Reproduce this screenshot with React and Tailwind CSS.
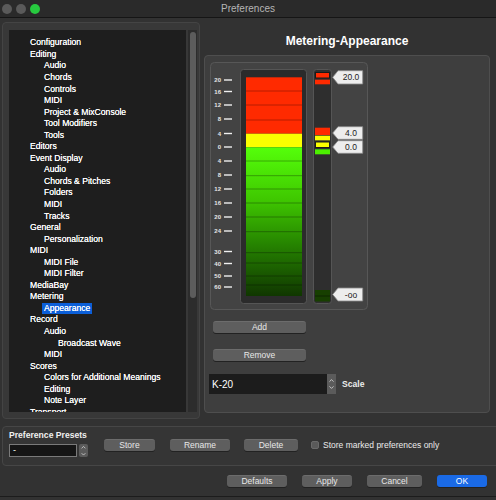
import { ChevronUp, ChevronDown } from 'lucide-react';

const tree = [
  ['Configuration', 0], ['Editing', 0], ['Audio', 1], ['Chords', 1], ['Controls', 1], ['MIDI', 1],
  ['Project & MixConsole', 1], ['Tool Modifiers', 1], ['Tools', 1], ['Editors', 0], ['Event Display', 0],
  ['Audio', 1], ['Chords & Pitches', 1], ['Folders', 1], ['MIDI', 1], ['Tracks', 1], ['General', 0],
  ['Personalization', 1], ['MIDI', 0], ['MIDI File', 1], ['MIDI Filter', 1], ['MediaBay', 0],
  ['Metering', 0], ['Appearance', 1, true], ['Record', 0], ['Audio', 1], ['Broadcast Wave', 2],
  ['MIDI', 1], ['Scores', 0], ['Colors for Additional Meanings', 1], ['Editing', 1], ['Note Layer', 1],
  ['Transport', 0],
];

const indent = ['pl-[21px]', 'pl-[35px]', 'pl-[49px]'];

// scale labels on the meter (label, y inside the meter box)
const scale = [
  ['20', 18], ['16', 29.5], ['12', 43], ['8', 57], ['4', 71.5], ['0', 85], ['4', 99], ['8', 113],
  ['12', 127], ['16', 141], ['20', 155], ['24', 169], ['30', 189.5], ['40', 201.5], ['50', 214], ['60', 225],
];
const redLines = [29, 43, 58];
const greenLines = [99, 113.7, 127, 141, 155, 169.7, 190.7, 201, 214, 223];

const tags = [
  ['20.0', 8.7, 22],
  ['4.0', 64.7, 77.3],
  ['0.0', 78.7, 91.3],
  ['-oo', 226, 239],
];

const Btn = ({ w, children, blue }) => (
  <button
    className={`${w} h-[12px] block rounded-[3px] text-[8.5px] leading-[11px] text-center shadow-[0_1px_0_#222] ${
      blue ? 'bg-[#1a6ae6] text-white' : 'bg-[#5e5e5e] text-[#e8e8e8] border-t border-[#6c6c6c]'
    }`}
  >
    {children}
  </button>
);

const Meter = () => (
  <svg width="158" height="248" className="block">
    <defs>
      <linearGradient id="grn" x1="0" y1="0" x2="0" y2="1">
        <stop offset="0" stopColor="#55ff0a" />
        <stop offset="0.35" stopColor="#3fc800" />
        <stop offset="0.65" stopColor="#268400" />
        <stop offset="1" stopColor="#103600" />
      </linearGradient>
    </defs>
    <rect x="0.5" y="0.5" width="157" height="247" rx="4" fill="#434343" stroke="#575757" />
    {scale.map(([l, y], i) => (
      <g key={i}>
        <text x="11" y={y + 2} textAnchor="end" fontSize="6" fontWeight="bold" fill="#e6e6e6" fontFamily="Liberation Sans, sans-serif">{l}</text>
        <line x1="14" x2="22" y1={y} y2={y} stroke="#f0f0f0" strokeWidth="1.4" />
      </g>
    ))}
    <rect x="30.5" y="7.5" width="66" height="234" rx="3" fill="#2b2b2b" stroke="#555" />
    <rect x="36" y="15.3" width="56" height="56.4" fill="#ff2a00" />
    <rect x="36" y="71.7" width="56" height="13.6" fill="#fbff00" />
    <rect x="36" y="85.3" width="56" height="148.7" fill="url(#grn)" />
    {redLines.map((y) => <line key={y} x1="36" x2="92" y1={y} y2={y} stroke="#b81d00" strokeWidth="1" />)}
    {greenLines.map((y) => <line key={y} x1="36" x2="92" y1={y} y2={y} stroke="rgba(0,0,0,0.3)" strokeWidth="1" />)}
    <rect x="103.5" y="7.5" width="18" height="234" rx="3" fill="#2e2e2e" stroke="#555" />
    <rect x="105.5" y="10.5" width="14" height="5.5" fill="#ff2a00" stroke="#1a1a1a" />
    <rect x="105" y="17.7" width="15" height="4.6" fill="#ff2a00" />
    <rect x="105" y="65.7" width="15" height="7.3" fill="#ff2a00" />
    <rect x="105" y="73.7" width="15" height="4.6" fill="#fbff00" />
    <rect x="105.5" y="80" width="14" height="5.5" fill="#fbff00" stroke="#1a1a1a" />
    <rect x="105" y="87.3" width="15" height="5" fill="#4cf000" />
    <rect x="105" y="228" width="15" height="11.5" fill="#173f00" />
    <line x1="105" x2="120" y1="234" y2="234" stroke="rgba(0,0,0,0.4)" />
    {tags.map(([t, y1, y2]) => {
      const m = (y1 + y2) / 2;
      return (
        <g key={t}>
          <path d={`M122.7 ${m} L128 ${y1} L152.7 ${y1} L152.7 ${y2} L128 ${y2} Z`} fill="#ededed" stroke="#8a8a8a" strokeWidth="0.8" />
          <text x="141" y={m + 3} textAnchor="middle" fontSize="8.5" fill="#222" fontFamily="Liberation Sans, sans-serif">{t}</text>
        </g>
      );
    })}
  </svg>
);

const Stepper = ({ cls }) => (
  <div className={`${cls} flex flex-col items-center justify-center bg-[#5b5b5b] text-[#e8e8e8]`}>
    <ChevronUp size={7} strokeWidth={2.5} />
    <ChevronDown size={7} strokeWidth={2.5} />
  </div>
);

export default function App() {
  return (
    <div className="w-[496px] h-[500px] bg-[#323232] flex flex-col overflow-hidden font-['Liberation_Sans',sans-serif] text-white">
      {/* title bar */}
      <div className="h-[18px] bg-[#2a2a2a] border-b border-[#151515] flex items-center">
        <div className="w-[44px] flex items-center gap-[4px] pl-[2px]">
          <span className="w-[10px] h-[10px] rounded-full bg-[#5a5a5a]" />
          <span className="w-[10px] h-[10px] rounded-full bg-[#5a5a5a]" />
          <span className="w-[10px] h-[10px] rounded-full bg-[#27c93f]" />
        </div>
        <div className="flex-1 text-center text-[10px] text-[#b5b5b5]">Preferences</div>
        <div className="w-[44px]" />
      </div>

      {/* main */}
      <div className="flex pt-[4px] pl-[2px]">
        <div className="w-[198px] h-[397px] rounded-[4px] bg-[#383838] border border-[#444] pl-[6px] pt-[7px] flex gap-[2px]">
          <div className="w-[177px] h-[382px] bg-[#1e1e1e] pt-[7px] overflow-hidden">
            {tree.map(([label, lvl, sel], i) => (
              <div key={i} className={`h-[11.56px] flex items-center text-[8.6px] whitespace-nowrap [text-shadow:0_0_0.4px_#fff] ${indent[lvl]}`}>
                <span className={sel ? 'bg-[#0b5fd8] px-[2px] -ml-[2px] leading-[10.5px]' : ''}>{label}</span>
              </div>
            ))}
          </div>
          <div className="w-[9px] h-[382px] bg-[#2c2c2c] pt-[2px] flex justify-center">
            <div className="w-[6px] h-[266px] rounded-full bg-[#5c5c5c]" />
          </div>
        </div>

        <div className="ml-[4px] w-[286px] flex flex-col">
          <div className="h-[33px] pt-[4px] flex items-center justify-center text-[12px] font-bold">Metering-Appearance</div>
          <div className="h-[358px] rounded-[4px] bg-[#3e3e3e] border border-[#4e4e4e] pl-[5px] pt-[6px] flex flex-col items-start">
            <Meter />
            <div className="mt-[11px] ml-[3px] flex"><Btn w="w-[93px]">Add</Btn></div>
            <div className="mt-[16px] ml-[3px] flex"><Btn w="w-[93px]">Remove</Btn></div>
            <div className="mt-[13px] -ml-[1px] flex items-center">
              <div className="w-[118px] h-[20px] bg-[#1c1c1c] flex items-center pl-[3px] text-[10px]">K-20</div>
              <Stepper cls="w-[9px] h-[20px]" />
              <span className="ml-[6px] text-[8.6px] font-bold text-[#ececec]">Scale</span>
            </div>
          </div>
        </div>
      </div>

      {/* preference presets */}
      <div className="mt-[7px] ml-[2px] w-[500px] h-[40px] rounded-[4px] bg-[#353535] border border-[#464646] pl-[6px] flex items-start">
        <div className="flex flex-col pt-[3px]">
          <div className="text-[8.6px] font-bold leading-[10px] text-[#f0f0f0]">Preference Presets</div>
          <div className="mt-[4px] flex items-center gap-[2px]">
            <div className="w-[68px] h-[13px] bg-[#151515] border border-[#7a7a7a] text-[9px] leading-[11px] pl-[3px]">-</div>
            <Stepper cls="w-[9px] h-[13px] rounded-[2px]" />
          </div>
        </div>
        <div className="mt-[12px] ml-[16px] flex items-center">
          <Btn w="w-[51px]">Store</Btn>
          <div className="ml-[15px] flex"><Btn w="w-[60px]">Rename</Btn></div>
          <div className="ml-[14px] flex"><Btn w="w-[54px]">Delete</Btn></div>
          <span className="ml-[13px] w-[8px] h-[8px] rounded-[2px] bg-[#5a5a5a] border border-[#6a6a6a]" />
          <span className="ml-[4px] text-[8.5px] text-[#ececec]">Store marked preferences only</span>
        </div>
      </div>

      {/* footer */}
      <div className="mt-[9px] h-[22px] border-b border-[#1c1c1c] flex items-start justify-end pr-[9px] gap-[15px]">
        <Btn w="w-[60px]">Defaults</Btn>
        <Btn w="w-[50px]">Apply</Btn>
        <Btn w="w-[55px]">Cancel</Btn>
        <Btn w="w-[50px]" blue>OK</Btn>
      </div>
    </div>
  );
}
